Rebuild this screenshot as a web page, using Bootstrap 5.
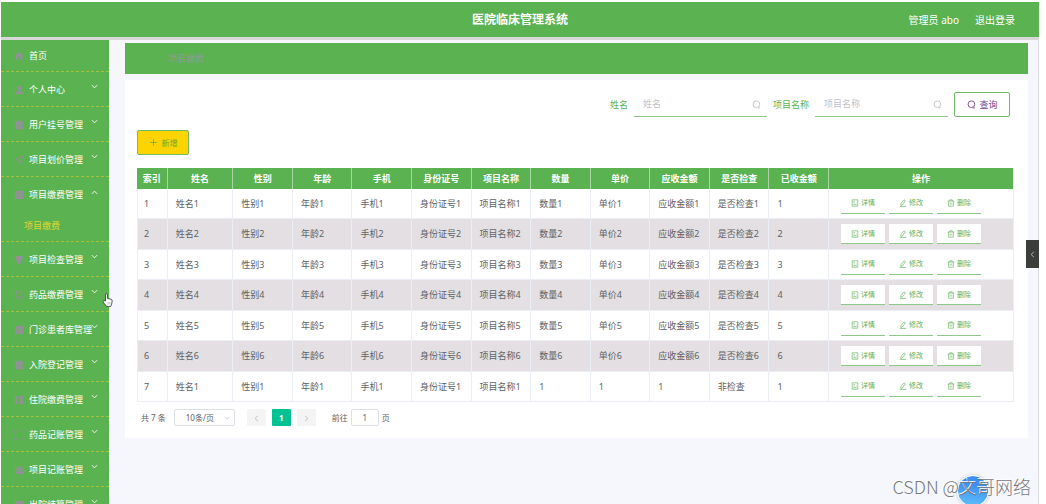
<!DOCTYPE html>
<html lang="zh-CN">
<head>
<meta charset="utf-8">
<meta name="viewport" content="width=device-width, initial-scale=1">
<title>医院临床管理系统</title>
<link rel="stylesheet" href="https://cdn.jsdelivr.net/npm/bootstrap@5.3.0/dist/css/bootstrap.min.css">
<style>
:root { --green: #5ab250; --muted: #93909b; }
body { font-family: "Noto Sans", "Noto Sans CJK SC", sans-serif; font-size: 9px; line-height: 14px; color: #606266; background: #fff; }
button, input, select { font-family: inherit; }
.app-shell { height: 100vh; padding: 2px 7px 0 1px; overflow: hidden; }
.top-bar { height: 38px; background: var(--green); border-bottom: 3px solid #d8d8d8; color: #fff; flex: none; position: relative; z-index: 1; }
.top-bar h1 { font-size: 12px; line-height: 18px; font-weight: 700; }
.top-bar .user-links { font-size: 10px; right: 24px; }
.top-bar a { color: #fff; }
.work-area { background: #f6f7fc; border-right: 1px solid #dddde4; min-height: 0; }

.side-menu { width: 108px; background: var(--green); flex: none; overflow: hidden; }
.side-link { height: 35px; padding: 1px 11px 0 13px; color: #fff; border-bottom: 1px dashed #a9bf35; white-space: nowrap; }
.side-link.home-link { height: 32px; padding-top: 0; }
.side-link.opened { border-bottom: 0; }
.side-link svg.pict { width: 10px; height: 10px; margin-right: 5px; flex: none; color: var(--muted); }
.side-link svg.arrow { width: 7px; height: 7px; margin: 0 0 6px auto; flex: none; }
.side-link .caption { width: 60px; }
.side-sub { height: 30px; padding: 0 23px 1px; color: #dfd92f; border-bottom: 1px dashed #a9bf35; }

.main-col { padding: 3px 10px 0 16px; min-width: 0; }
.crumb-bar { height: 31px; background: var(--green); color: #8a9c9c; padding-left: 43px; }
.panel-box { background: #fff; margin-top: 6px; padding: 12px 14px 12px 12px; }
.search-row { gap: 6px; }
.field-label { color: var(--green); }
.line-input { width: 133px; }
.line-input input { width: 100%; height: 25px; border: 0; border-bottom: 1px solid #8cc886; padding: 0 24px 2px 9px; font-size: 9px; background: transparent; border-radius: 0; outline: 0; }
.line-input input::placeholder { color: #bfc2ca; opacity: 1; }
.line-input svg { width: 9px; height: 9px; right: 6px; top: 8px; color: #bfc2ca; }
.btn-find { width: 56px; height: 25px; border: 1px solid #6fba67; border-radius: 2px; padding: 0; font-size: 9px; line-height: 14px; color: #7b3f8c; background: #fff; }
.btn-add { width: 52px; height: 25px; border: 1px solid #6fba67; border-radius: 2px; padding: 0; font-size: 8px; line-height: 12px; color: #6fa832; background: #fdd300; margin: 13px 0; }
.btn-find svg, .btn-add svg { width: 9px; height: 9px; }

.data-grid { table-layout: fixed; width: 100%; border-collapse: separate; border-spacing: 0; border-right: 1px solid #ebeef5; }
.data-grid th { background: var(--green); color: #fff; height: 21px; padding: 0; text-align: center; font-weight: 700; border-right: 1px solid #a9d6a4; }
.data-grid td { height: 30px; padding: 0 0 0 8px; border-right: 1px solid #ebeef5; border-bottom: 1px solid #ebeef5; white-space: nowrap; }
.data-grid th:last-child, .data-grid td:last-child { border-right: 0; }
.data-grid td:first-child { border-left: 1px solid #ebeef5; padding-left: 6px; }
.data-grid tbody tr:nth-child(even) td { background: #e3dfe2; height: 31px; }
.data-grid td:last-child { padding-left: 12px; }
.c-index { width: 3.5%; } .c-name { width: 7.5%; } .c-std { width: 6.8%; }
.ops { gap: 4px; }
.op-btn { width: 44px; height: 20px; border: 0; border-bottom: 1px solid #8fc989; background: #fff; color: #5fae58; font-size: 7px; line-height: 10px; padding: 0; }
.op-btn svg { width: 8px; height: 8px; }

.pager { font-size: 8px; line-height: 12px; margin-top: 7px; padding-left: 4px; }
.page-steps { gap: 6px; margin: 0 8px 0 4px; }
.pager select { width: 61px; height: 17px; border: 1px solid #dcdfe6; border-radius: 2px; font-size: 8px; padding: 0 0 0 11px; appearance: none; color: #606266; background: #fff; }
.pager .size-box svg { width: 6px; height: 6px; right: 5px; top: 6px; color: #c0c4cc; }
.page-btn { width: 19px; height: 17px; border: 0; border-radius: 1px; background: #f4f4f5; color: #b5b8bf; padding: 0; font-size: 8px; line-height: 12px; }
.page-btn svg { width: 7px; height: 7px; }
.page-btn.current { background: #00c292; color: #fff; font-weight: 700; }
.pager input { width: 28px; height: 17px; border: 1px solid #dcdfe6; border-radius: 2px; font-size: 8px; text-align: center; padding: 0; color: #606266; margin: 0 3px; }

.drawer-tab { right: 7px; top: 240px; width: 13px; height: 28px; background: #3c3e3c; color: #c4c4c4; border: 0; z-index: 2; }
.drawer-tab svg { width: 7px; height: 7px; }
.float-ball { right: 57px; bottom: -3px; width: 32px; height: 32px; border-radius: 50%; border: 1px solid #fff; background: linear-gradient(190deg, #3d8ff5 30%, #62c4fb); box-shadow: 0 0 3px #bbc; }
.stamp { right: 15px; bottom: 5px; font-family: "Noto Sans CJK SC", sans-serif; font-size: 18px; line-height: 26px; font-weight: 300; color: #77787c; text-shadow: -1px -1px 0 #fff; white-space: nowrap; z-index: 2; }
.hand { left: 102px; top: 293px; width: 11px; height: 14px; z-index: 2; }
</style>
</head>
<body>
<svg class="d-none" aria-hidden="true">
  <symbol id="down" viewBox="0 0 8 8"><path d="M1 2.4 4 5.6 7 2.4" fill="none" stroke="currentColor"/></symbol>
  <symbol id="up" viewBox="0 0 8 8"><path d="M1 5.6 4 2.4 7 5.6" fill="none" stroke="currentColor"/></symbol>
  <symbol id="left" viewBox="0 0 8 8"><path d="M5.6 1 2.4 4 5.6 7" fill="none" stroke="currentColor"/></symbol>
  <symbol id="right" viewBox="0 0 8 8"><path d="M2.4 1 5.6 4 2.4 7" fill="none" stroke="currentColor"/></symbol>
  <symbol id="search" viewBox="0 0 10 10"><circle cx="4.900" cy="4.700" r="3.700" fill="none" stroke="currentColor"/><path d="M6.500 8.800h2.300" fill="none" stroke="currentColor"/></symbol>
  <symbol id="plus" viewBox="0 0 10 10"><path d="M5 1.500v7M1.500 5h7" stroke="currentColor" stroke-width=".9"/></symbol>
  <symbol id="doc" viewBox="0 0 10 10"><path d="M1.500 1h7v8h-7zM3 3h2M3 5h1.500M3 7h4M6 5h1" fill="none" stroke="currentColor" stroke-width=".8"/></symbol>
  <symbol id="pen" viewBox="0 0 10 10"><path d="M6.200 1 8 2.300 4.200 7.400 2.200 8 2.300 6zM1 9.300h8" fill="none" stroke="currentColor" stroke-width=".8"/></symbol>
  <symbol id="bin" viewBox="0 0 10 10"><path d="M1 2.500h8M3.500 2.500V1h3v1.500M2 2.500V9h6V2.500M4 4.500v2.500M6 4.500v2.500" fill="none" stroke="currentColor" stroke-width=".8"/></symbol>
  <symbol id="i-home" viewBox="0 0 10 10"><path d="M5 .8 9.300 5H8.300V9H6V6.200H4V9H1.700V5H.7z" fill="currentColor"/></symbol>
  <symbol id="i-user" viewBox="0 0 10 10"><circle cx="5" cy="3" r="2.300" fill="currentColor"/><path d="M1 9V7.200L3.500 6h3L9 7.200V9z" fill="currentColor"/></symbol>
  <symbol id="i-clip" viewBox="0 0 10 10"><path d="M1.200 1.500H3.200V.7h3.600v.8h2V9.300H1.200z" fill="currentColor"/><path d="m3 5.200 1.500 1.500L7.200 4" fill="none" stroke="#5ab250" stroke-width=".7"/></symbol>
  <symbol id="i-send" viewBox="0 0 10 10"><path d="M1 4.500 9 1 5.800 9 4.800 5.200z" fill="none" stroke="currentColor" stroke-width=".9"/></symbol>
  <symbol id="i-form" viewBox="0 0 10 10"><path d="M1 1h8v8H1z" fill="currentColor"/><path d="M3 4h4M3 6.200h4" stroke="#5ab250" stroke-width=".6"/></symbol>
  <symbol id="i-brush" viewBox="0 0 10 10"><path d="M1.500 1h7v3.500L6.500 6.500V9h-3V6.500L1.500 4.500z" fill="currentColor"/></symbol>
  <symbol id="i-crop" viewBox="0 0 10 10"><path d="M2.200.5v7.300h7.300M.5 2.200h7.300v7.300" fill="none" stroke="currentColor" stroke-width=".9"/></symbol>
  <symbol id="i-grid" viewBox="0 0 10 10"><path d="M1 1h3.400v3.400H1zM5.600 1H9v3.400H5.600zM1 5.600h3.400V9H1zM5.600 5.600H9V9H5.600z" fill="currentColor"/></symbol>
  <symbol id="i-scan" viewBox="0 0 10 10"><path d="M.8 3.200V.8h2.400M6.800.8h2.400v2.400M9.200 6.800v2.400H6.800M3.200 9.200H.8V6.800" fill="none" stroke="currentColor" stroke-width=".9"/></symbol>
  <symbol id="i-case" viewBox="0 0 10 10"><path d="M1 5.500V3.500h2V1.500h4v2h2v2zM1 6.200h8V9H1zM4 3.500h2v-1H4z" fill="currentColor" fill-rule="evenodd"/></symbol>
</svg>

<div class="app-shell d-flex flex-column position-relative">
  <header class="top-bar d-flex align-items-center justify-content-center">
    <h1 class="m-0">医院临床管理系统</h1>
    <div class="user-links position-absolute d-flex gap-3"><span>管理员 abo</span><a href="#" class="text-decoration-none">退出登录</a></div>
  </header>

  <div class="work-area d-flex flex-grow-1">
    <nav class="side-menu">
      <a href="#" class="side-link home-link d-flex align-items-center text-decoration-none"><svg class="pict"><use href="#i-home"/></svg><span class="caption">首页</span></a>
      <a href="#" class="side-link d-flex align-items-center text-decoration-none"><svg class="pict"><use href="#i-user"/></svg><span class="caption">个人中心</span><svg class="arrow"><use href="#down"/></svg></a>
      <a href="#" class="side-link d-flex align-items-center text-decoration-none"><svg class="pict"><use href="#i-clip"/></svg><span class="caption">用户挂号管理</span><svg class="arrow"><use href="#down"/></svg></a>
      <a href="#" class="side-link d-flex align-items-center text-decoration-none"><svg class="pict"><use href="#i-send"/></svg><span class="caption">项目划价管理</span><svg class="arrow"><use href="#down"/></svg></a>
      <a href="#" class="side-link opened d-flex align-items-center text-decoration-none"><svg class="pict"><use href="#i-form"/></svg><span class="caption">项目缴费管理</span><svg class="arrow"><use href="#up"/></svg></a>
      <a href="#" class="side-sub d-flex align-items-center text-decoration-none">项目缴费</a>
      <a href="#" class="side-link d-flex align-items-center text-decoration-none"><svg class="pict"><use href="#i-brush"/></svg><span class="caption">项目检查管理</span><svg class="arrow"><use href="#down"/></svg></a>
      <a href="#" class="side-link d-flex align-items-center text-decoration-none"><svg class="pict"><use href="#i-crop"/></svg><span class="caption">药品缴费管理</span><svg class="arrow"><use href="#down"/></svg></a>
      <a href="#" class="side-link d-flex align-items-center text-decoration-none"><svg class="pict"><use href="#i-form"/></svg><span class="caption">门诊患者库管理</span><svg class="arrow"><use href="#down"/></svg></a>
      <a href="#" class="side-link d-flex align-items-center text-decoration-none"><svg class="pict"><use href="#i-clip"/></svg><span class="caption">入院登记管理</span><svg class="arrow"><use href="#down"/></svg></a>
      <a href="#" class="side-link d-flex align-items-center text-decoration-none"><svg class="pict"><use href="#i-grid"/></svg><span class="caption">住院缴费管理</span><svg class="arrow"><use href="#down"/></svg></a>
      <a href="#" class="side-link d-flex align-items-center text-decoration-none"><svg class="pict"><use href="#i-scan"/></svg><span class="caption">药品记账管理</span><svg class="arrow"><use href="#down"/></svg></a>
      <a href="#" class="side-link d-flex align-items-center text-decoration-none"><svg class="pict"><use href="#i-case"/></svg><span class="caption">项目记账管理</span><svg class="arrow"><use href="#down"/></svg></a>
      <a href="#" class="side-link d-flex align-items-center text-decoration-none"><svg class="pict"><use href="#i-form"/></svg><span class="caption">出院结算管理</span><svg class="arrow"><use href="#down"/></svg></a>
    </nav>

    <main class="main-col flex-grow-1">
      <div class="crumb-bar d-flex align-items-center">项目缴费</div>
      <section class="panel-box">
        <form class="search-row d-flex justify-content-end align-items-center pe-1">
          <label class="field-label" for="f-name">姓名</label>
          <div class="line-input position-relative"><input id="f-name" type="text" placeholder="姓名"><svg class="position-absolute"><use href="#search"/></svg></div>
          <label class="field-label" for="f-item">项目名称</label>
          <div class="line-input position-relative"><input id="f-item" type="text" placeholder="项目名称"><svg class="position-absolute"><use href="#search"/></svg></div>
          <button type="button" class="btn-find d-flex align-items-center justify-content-center gap-1"><svg><use href="#search"/></svg>查询</button>
        </form>
        <button type="button" class="btn-add d-flex align-items-center justify-content-center gap-1"><svg><use href="#plus"/></svg>新增</button>

        <table class="data-grid">
          <colgroup><col class="c-index"><col class="c-name"><col class="c-std"><col class="c-std"><col class="c-std"><col class="c-std"><col class="c-std"><col class="c-std"><col class="c-std"><col class="c-std"><col class="c-std"><col class="c-std"><col></colgroup>
          <thead><tr><th>索引</th><th>姓名</th><th>性别</th><th>年龄</th><th>手机</th><th>身份证号</th><th>项目名称</th><th>数量</th><th>单价</th><th>应收金额</th><th>是否检查</th><th>已收金额</th><th>操作</th></tr></thead>
          <tbody>
            <tr><td>1</td><td>姓名1</td><td>性别1</td><td>年龄1</td><td>手机1</td><td>身份证号1</td><td>项目名称1</td><td>数量1</td><td>单价1</td><td>应收金额1</td><td>是否检查1</td><td>1</td><td><div class="ops d-flex"><button type="button" class="op-btn"><svg><use href="#doc"/></svg> 详情</button><button type="button" class="op-btn"><svg><use href="#pen"/></svg> 修改</button><button type="button" class="op-btn"><svg><use href="#bin"/></svg> 删除</button></div></td></tr>
            <tr><td>2</td><td>姓名2</td><td>性别2</td><td>年龄2</td><td>手机2</td><td>身份证号2</td><td>项目名称2</td><td>数量2</td><td>单价2</td><td>应收金额2</td><td>是否检查2</td><td>2</td><td><div class="ops d-flex"><button type="button" class="op-btn"><svg><use href="#doc"/></svg> 详情</button><button type="button" class="op-btn"><svg><use href="#pen"/></svg> 修改</button><button type="button" class="op-btn"><svg><use href="#bin"/></svg> 删除</button></div></td></tr>
            <tr><td>3</td><td>姓名3</td><td>性别3</td><td>年龄3</td><td>手机3</td><td>身份证号3</td><td>项目名称3</td><td>数量3</td><td>单价3</td><td>应收金额3</td><td>是否检查3</td><td>3</td><td><div class="ops d-flex"><button type="button" class="op-btn"><svg><use href="#doc"/></svg> 详情</button><button type="button" class="op-btn"><svg><use href="#pen"/></svg> 修改</button><button type="button" class="op-btn"><svg><use href="#bin"/></svg> 删除</button></div></td></tr>
            <tr><td>4</td><td>姓名4</td><td>性别4</td><td>年龄4</td><td>手机4</td><td>身份证号4</td><td>项目名称4</td><td>数量4</td><td>单价4</td><td>应收金额4</td><td>是否检查4</td><td>4</td><td><div class="ops d-flex"><button type="button" class="op-btn"><svg><use href="#doc"/></svg> 详情</button><button type="button" class="op-btn"><svg><use href="#pen"/></svg> 修改</button><button type="button" class="op-btn"><svg><use href="#bin"/></svg> 删除</button></div></td></tr>
            <tr><td>5</td><td>姓名5</td><td>性别5</td><td>年龄5</td><td>手机5</td><td>身份证号5</td><td>项目名称5</td><td>数量5</td><td>单价5</td><td>应收金额5</td><td>是否检查5</td><td>5</td><td><div class="ops d-flex"><button type="button" class="op-btn"><svg><use href="#doc"/></svg> 详情</button><button type="button" class="op-btn"><svg><use href="#pen"/></svg> 修改</button><button type="button" class="op-btn"><svg><use href="#bin"/></svg> 删除</button></div></td></tr>
            <tr><td>6</td><td>姓名6</td><td>性别6</td><td>年龄6</td><td>手机6</td><td>身份证号6</td><td>项目名称6</td><td>数量6</td><td>单价6</td><td>应收金额6</td><td>是否检查6</td><td>6</td><td><div class="ops d-flex"><button type="button" class="op-btn"><svg><use href="#doc"/></svg> 详情</button><button type="button" class="op-btn"><svg><use href="#pen"/></svg> 修改</button><button type="button" class="op-btn"><svg><use href="#bin"/></svg> 删除</button></div></td></tr>
            <tr><td>7</td><td>姓名1</td><td>性别1</td><td>年龄1</td><td>手机1</td><td>身份证号1</td><td>项目名称1</td><td>1</td><td>1</td><td>1</td><td>非检查</td><td>1</td><td><div class="ops d-flex"><button type="button" class="op-btn"><svg><use href="#doc"/></svg> 详情</button><button type="button" class="op-btn"><svg><use href="#pen"/></svg> 修改</button><button type="button" class="op-btn"><svg><use href="#bin"/></svg> 删除</button></div></td></tr>
          </tbody>
        </table>

        <div class="pager d-flex align-items-center">
          <span class="me-2">共 7 条</span>
          <div class="size-box position-relative me-2"><select aria-label="每页条数"><option>10条/页</option></select><svg class="position-absolute"><use href="#down"/></svg></div>
          <div class="page-steps d-flex">
            <button type="button" class="page-btn" aria-label="上一页"><svg><use href="#left"/></svg></button>
            <button type="button" class="page-btn current">1</button>
            <button type="button" class="page-btn" aria-label="下一页"><svg><use href="#right"/></svg></button>
          </div>
          <label class="ms-2" for="f-page">前往</label>
          <input id="f-page" type="text" value="1"><span>页</span>
        </div>
      </section>
    </main>
  </div>

  <button type="button" class="drawer-tab position-absolute p-0 d-flex align-items-center justify-content-center" aria-label="展开"><svg><use href="#left"/></svg></button>
  <div class="float-ball position-absolute"></div>
  <div class="stamp position-absolute">CSDN @文哥网络</div>
  <svg class="hand position-absolute" viewBox="0 0 11 14"><path d="M3.500 8V1.800a1 1 0 0 1 2 0V5.500l3.500.7q1.300.4 1.200 1.800l-.6 3.200-.8 2.200H4.500L1 8.800Q.8 7.500 2 7.500z" fill="#fff" stroke="#333" stroke-width=".8"/><path d="M6 9v2.500M7.800 9v2.500" stroke="#777" stroke-width=".5"/></svg>
</div>
<script src="https://cdn.jsdelivr.net/npm/bootstrap@5.3.0/dist/js/bootstrap.bundle.min.js"></script>
</body>
</html>
